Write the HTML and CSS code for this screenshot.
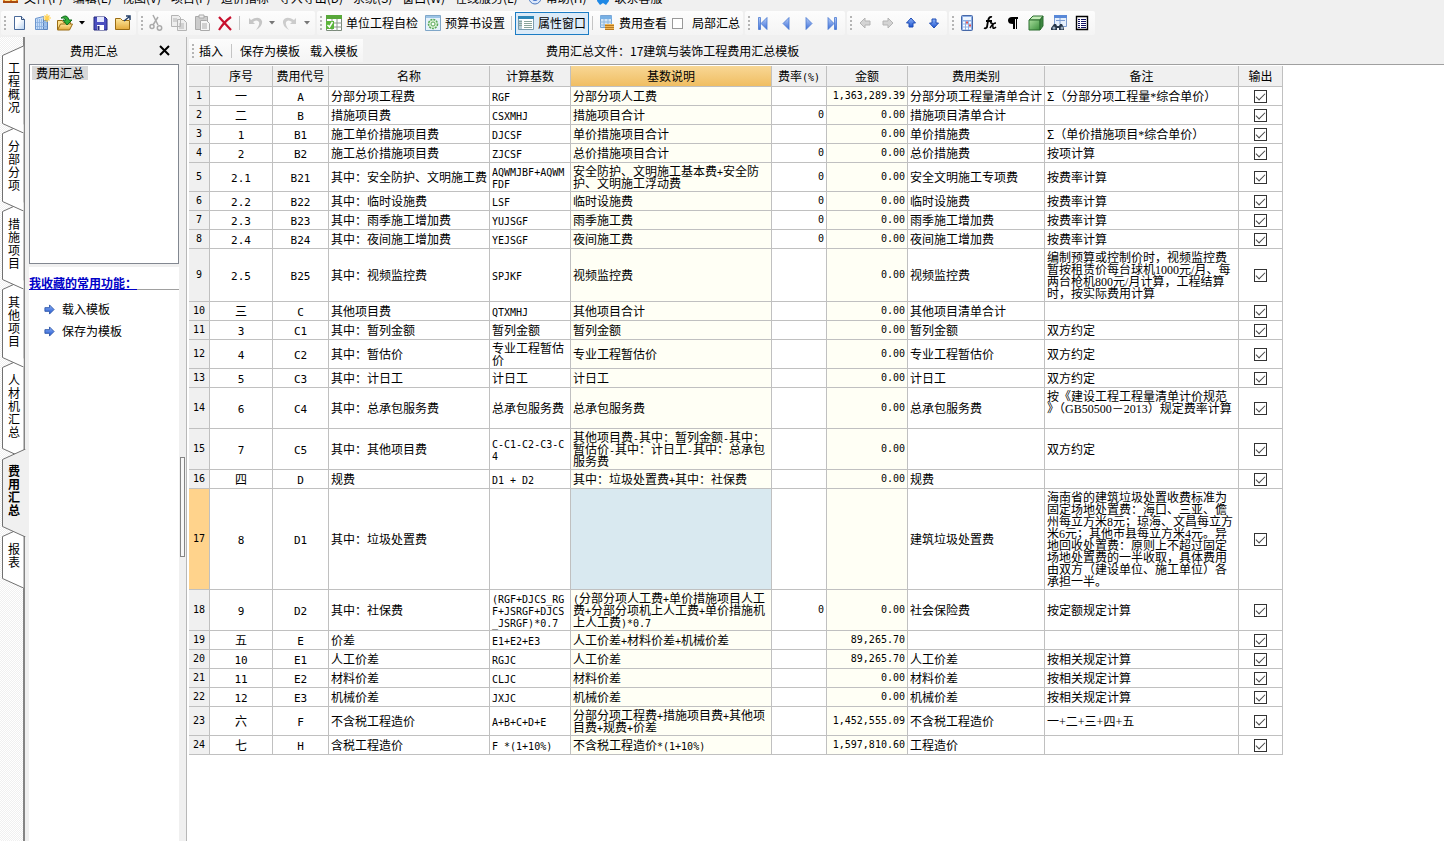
FILE: index.html
```html
<!DOCTYPE html>
<html lang="zh-CN">
<head>
<meta charset="utf-8">
<title>费用汇总</title>
<link rel="stylesheet" href="styles.css">
</head>
<body>
<svg class="defs" aria-hidden="true">
  <defs>
    <linearGradient id="blue" x1="0" y1="0" x2="0" y2="1"><stop offset="0" stop-color="#b5cdf8"/><stop offset="1" stop-color="#3f6fd8"/></linearGradient>
    <linearGradient id="deep" x1="0" y1="0" x2="0" y2="1"><stop offset="0" stop-color="#8fb4f8"/><stop offset="1" stop-color="#1f55d0"/></linearGradient>
    <linearGradient id="gold" x1="0" y1="0" x2="0" y2="1"><stop offset="0" stop-color="#ffe9a0"/><stop offset="1" stop-color="#e3a93a"/></linearGradient>
    <linearGradient id="page" x1="0" y1="0" x2="1" y2="1"><stop offset="0.4" stop-color="#fff"/><stop offset="1" stop-color="#b4d0f0"/></linearGradient>
    <linearGradient id="green" x1="0" y1="0" x2="1" y2="1"><stop offset="0" stop-color="#a6dc9a"/><stop offset="1" stop-color="#3a8f3c"/></linearGradient>
    <symbol id="arrow" viewBox="0 0 12 12"><path d="M1 4h5V1l5 5-5 5V8H1z"/></symbol>
  </defs>
</svg>
<div class="app">
  <nav class="menu">
    <svg class="logo" viewBox="0 0 18 14"><path d="M1 0h15v13H1z" fill="#e88420"/><path d="M3 2h5v9H3zM10 2h4v9h-4z" fill="#ffe08a"/><path d="M1 12h15" stroke="#a84a10" stroke-width="2"/></svg>
    <a href="#">文件(F)</a><a href="#">编辑(E)</a><a href="#">视图(V)</a><a href="#">项目(P)</a><a href="#">造价指标</a><a href="#">导入导出(D)</a><a href="#">系统(S)</a><a href="#">窗口(W)</a><a href="#">在线服务(L)</a>
    <a href="#"><svg viewBox="0 0 14 14"><circle cx="7" cy="7" r="6" fill="#dce8fa" stroke="#4a78c0"/><circle cx="7" cy="7" r="3" fill="#3f70c8"/></svg>帮助(H)</a>
    <a href="#"><svg viewBox="0 0 14 14"><path d="M2 1h10l1 9-3 4-3-2-3 2-3-4z" fill="#1e88e5"/></svg>联系客服</a>
  </nav>

  <header class="toolbar">
    <div class="group">
      <i class="grip"></i>
      <button class="tool" title="新建"><svg viewBox="0 0 18 18"><path d="M4.500 2.500h7l3 3v10h-10z" fill="url(#page)" stroke="#4a6a9a"/><path d="M11.500 2.500v3h3" fill="#dfeafa" stroke="#34507c"/></svg></button>
      <button class="tool" title="新建向导"><svg viewBox="0 0 18 18"><path d="M2.500 4.500l8-2v13h-8z" fill="#c4dcf8" stroke="#6a94cc"/><path d="M10.500 6.500h4v9h-4z" fill="#9cbfea" stroke="#5c86c0"/><path d="M4.500 5v10M6.500 5v10M8.500 5v10M3 8.500h11M3 12.500h11" stroke="#88aee0" stroke-width=".8"/><path d="M14 0v8M10 4h8M11.500 1.500l5 5M16.500 1.500l-5 5" stroke="#ffd04c" stroke-width="1.200"/></svg></button>
      <button class="tool" title="打开"><svg viewBox="0 0 18 18"><path d="M1.500 15.500v-9h5l1 2h7v2" fill="#ffe08a" stroke="#9a6c14"/><path d="M1.500 16l3-6h12l-3 6z" fill="url(#gold)" stroke="#9a6c14"/><path d="M5 4q6-5 8 2h3l-5 5-4-5h3q-1-3-5-2z" fill="#30b038" stroke="#136b1b"/></svg></button>
      <button class="drop" aria-label="更多"><svg viewBox="0 0 6 4"><path d="M0 0h6L3 3.500z"/></svg></button>
      <button class="tool" title="保存"><svg viewBox="0 0 18 18"><path d="M3 3h11l2 2v11H3z" fill="#4b4fc0" stroke="#25287c"/><path d="M6 3h7v5H6z" fill="#e4e8ff"/><path d="M6 11h7v5H6z" fill="#fff"/><path d="M7.500 12v4" stroke="#25287c" stroke-width="2"/></svg></button>
      <button class="tool" title="关闭"><svg viewBox="0 0 18 18"><path d="M1.500 15.500v-11h5l2 2h7v9z" fill="url(#gold)" stroke="#9a6c14"/><path d="M10 7l5-4m-3-1h4v4" fill="none" stroke="#25406a" stroke-width="1.500"/></svg></button>
    </div>
    <div class="group">
      <i class="grip"></i>
      <button class="tool" title="剪切"><svg viewBox="0 0 18 18" fill="none" stroke="#aaa" stroke-width="1.500"><path d="M6 1l5 10M11 3l-5 8"/><circle cx="5" cy="12.500" r="2"/><circle cx="12.500" cy="14" r="2.200"/></svg></button>
      <button class="tool" title="复制"><svg viewBox="0 0 18 18" fill="#eee" stroke="#b4b4b4"><path d="M1.500 1.500h7l2 2v9h-9zM7.500 5.500h6l3 3v8h-9z"/><path d="M3 5h4M3 7h4M9 10h5M9 12h5M9 14h5"/></svg></button>
      <button class="tool" title="粘贴"><svg viewBox="0 0 18 18" fill="#ccc" stroke="#aaa"><path d="M2.500 2.500h12v13h-12z"/><path d="M6 1h5v3H6z" fill="#eee"/><path d="M7.500 6.500h6l3 3v7h-9z" fill="#f6f6f6"/><path d="M9 10h5M9 12h5M9 14h5"/></svg></button>
      <button class="tool" title="删除"><svg viewBox="0 0 18 18"><path d="M3 3l12 13M15 3Q8 8 3 16" fill="none" stroke="#c8102e" stroke-width="2.200"/></svg></button>
      <i class="sep"></i>
      <button class="tool" title="撤销"><svg viewBox="0 0 18 18"><path d="M3 4v6h6L7 8q4-3 6 0 1 3-3 8 7-4 6-9-3-6-11-1z" fill="#c6c6c6"/></svg></button>
      <button class="drop dim" aria-label="更多撤销"><svg viewBox="0 0 6 4"><path d="M0 0h6L3 3.500z"/></svg></button>
      <button class="tool" title="重做"><svg viewBox="0 0 18 18"><path d="M15 4v6H9l2-2Q7 5 5 8q-1 3 3 8-7-4-6-9 3-6 11-1z" fill="#ccc"/></svg></button>
      <button class="drop dim" aria-label="更多重做"><svg viewBox="0 0 6 4"><path d="M0 0h6L3 3.500z"/></svg></button>
    </div>
    <div class="group">
      <i class="grip"></i>
      <button class="text-tool"><svg viewBox="0 0 16 16"><path d="M.5.500h15v15H.5z" fill="#fff" stroke="#7a8a7a"/><path d="M0 0h16v4H0z" fill="#58a83a"/><path d="M6 4v12M11 4v12M0 8h16M0 12h16" stroke="#8a968a"/><path d="M0 6h8v8H0z" fill="#5cb53c"/><path d="M1.500 10l2 2 3-5" fill="none" stroke="#fff" stroke-width="1.500"/></svg>单位工程自检</button>
      <button class="text-tool second"><svg viewBox="0 0 16 16"><path d="M.5.500h15v15H.5z" fill="#e6f2fb" stroke="#7fa6c8"/><path d="M1 1h14v2H1z" fill="#9cc4e6"/><circle cx="8" cy="9" r="4.500" fill="#d9f0d2" stroke="#58a858" stroke-width="1.500" stroke-dasharray="2 1"/><circle cx="8" cy="9" r="2" fill="#fff" stroke="#58a858"/></svg>预算书设置</button>
      <i class="sep"></i>
      <button class="text-tool pressed"><svg viewBox="0 0 16 16"><path d="M.5 1.500h15v13H.5z" fill="#fff" stroke="#7a9cae"/><path d="M0 1h16v3H0z" fill="#2d86b8"/><path d="M1 5h3v9H1z" fill="#b8ccd6"/><path d="M6 6.500h8M6 8.500h8M6 10.500h8M6 12.500h8M1 6.500h3M1 8.500h3M1 10.500h3" stroke="#8aa49a"/></svg>属性窗口</button>
      <i class="sep"></i>
      <button class="text-tool"><svg viewBox="0 0 16 16"><path d="M1.500.500h11v12h-11z" fill="#d5e7f8" stroke="#78a4d4"/><path d="M1 1h12v3H1z" fill="#78b0e4"/><path d="M5 4v8M9 4v8M1 7h12M1 10h12" stroke="#8db6de"/><path d="M6 9h9v6H6z" fill="#f0b858"/><path d="M6 10.500h9M6 12.500h9M6 14.500h9" stroke="#b87820"/></svg>费用查看</button>
      <label class="partial"><input type="checkbox">局部汇总</label>
    </div>
    <div class="group">
      <i class="grip"></i>
      <button class="tool" title="第一个"><svg viewBox="0 0 18 18" fill="url(#blue)" stroke="#4a78d0" stroke-width=".8"><path d="M4.500 3.500h2v12h-2zM13 3.500v12l-6-6z"/></svg></button>
      <button class="tool" title="上一个"><svg viewBox="0 0 18 18" fill="url(#blue)" stroke="#4a78d0" stroke-width=".8"><path d="M12 3.500v12l-6-6z"/></svg></button>
      <button class="tool" title="下一个"><svg viewBox="0 0 18 18" fill="url(#blue)" stroke="#4a78d0" stroke-width=".8"><path d="M6 3.500v12l6-6z"/></svg></button>
      <button class="tool" title="最后一个"><svg viewBox="0 0 18 18" fill="url(#blue)" stroke="#4a78d0" stroke-width=".8"><path d="M11.500 3.500h2v12h-2zM5 3.500v12l6-6z"/></svg></button>
    </div>
    <div class="group">
      <i class="grip"></i>
      <button class="tool" title="左移"><svg viewBox="0 0 18 18"><path d="M14 7H9V4L4 9l5 5v-3h5z" fill="#d4d4d4" stroke="#b4b4b4"/></svg></button>
      <button class="tool" title="右移"><svg viewBox="0 0 18 18"><path d="M4 7h5V4l5 5-5 5v-3H4z" fill="#d4d4d4" stroke="#b4b4b4"/></svg></button>
      <button class="tool" title="上移"><svg viewBox="0 0 18 18"><path d="M7 13V9H4.500L9 4l4.500 5H11v4z" fill="url(#deep)" stroke="#1f4cb4"/></svg></button>
      <button class="tool" title="下移"><svg viewBox="0 0 18 18"><path d="M7 5v4H4.500L9 14l4.500-5H11V5z" fill="url(#deep)" stroke="#1f4cb4"/></svg></button>
    </div>
    <div class="group">
      <i class="grip"></i>
      <button class="tool" title="计算器"><svg viewBox="0 0 18 18"><rect x="3.500" y="1.500" width="11" height="15" rx="1" fill="#8fb0e6" stroke="#4668a8"/><path d="M5 3h8v3H5z" fill="#eef6ff"/><path d="M5 8.500h8M5 11.500h8M5 14.500h8" stroke="#fff" stroke-width="2" stroke-dasharray="2 1"/><path d="M8 8.500h2M11 11.500h2" stroke="#e05050" stroke-width="2"/></svg></button>
      <button class="tool" title="函数"><svg viewBox="0 0 18 18" fill="none" stroke="#000"><path d="M11 3q-3-1-4 4l-1 6q-1 2-3 1M5 7h6" stroke-width="1.800"/><path d="M9 9q3-1 3 5 1 1 3-1M15 9q-3 0-6 5" stroke-width="1.500"/></svg></button>
      <button class="tool" title="段落"><svg viewBox="0 0 18 18"><path d="M8 3h6v2h-1v10h-1V5h-1v10H9v-5Q4 10 4 6.500 4 3 8 3z"/></svg></button>
      <button class="tool" title="三维"><svg viewBox="0 0 18 18" stroke="#2c6e30"><path d="M2 6l4-4h10l-3 4z" fill="#c4ecb8"/><path d="M2 6h11v10H2z" fill="url(#green)"/><path d="M13 6l3-4v10l-3 4z" fill="#3c8640"/></svg></button>
      <button class="tool" title="查找"><svg viewBox="0 0 18 18"><path d="M4.500 1.500h12v11h-12z" fill="#e6f0fc" stroke="#7c9cd0"/><path d="M4 1h13v3H4z" fill="#5888d8"/><path d="M6 6.500h9M10 4v6" stroke="#7c9cd0"/><path d="M4 10h2l1 2h2l1-2h2l2 4v2H9v-2H7v2H1v-2z" fill="#28384a"/><circle cx="4" cy="14" r="1.500" fill="#9ab"/><circle cx="12" cy="14" r="1.500" fill="#9ab"/></svg></button>
      <button class="tool" title="列表"><svg viewBox="0 0 18 18"><path d="M3.500 2.500h11v13h-11z" fill="#fff" stroke="#000" stroke-width="1.400"/><path d="M5 5.500h2M5 7.500h2M5 9.500h2M5 11.500h2M5 13.500h2M8 5.500h5M8 7.500h5M8 9.500h5M8 11.500h5M8 13.500h5" stroke="#101060"/></svg></button>
    </div>
  </header>

  <div class="main">
    <nav class="tabs">
      <button class="tab"><svg viewBox="0 0 22 87"><path d="M21.500 0L.5 9.500v68l21 9.500"/></svg><span>工程概况</span></button>
      <button class="tab"><svg viewBox="0 0 22 87"><path d="M21.500 0L.5 9.500v68l21 9.500"/></svg><span>分部分项</span></button>
      <button class="tab"><svg viewBox="0 0 22 87"><path d="M21.500 0L.5 9.500v68l21 9.500"/></svg><span>措施项目</span></button>
      <button class="tab"><svg viewBox="0 0 22 87"><path d="M21.500 0L.5 9.500v68l21 9.500"/></svg><span>其他项目</span></button>
      <button class="tab"><svg viewBox="0 0 22 100"><path d="M21.500 0L.5 9.500v81l21 9.500"/></svg><span>人材机汇总</span></button>
      <button class="tab current"><svg viewBox="0 0 24 88"><path d="M23.500 0L.5 10.500v67l23 10.500"/></svg><span>费用汇总</span></button>
      <button class="tab"><svg viewBox="0 0 22 61"><path d="M21.500 0L.5 9.500v42l21 9.500"/></svg><span>报表</span></button>
    </nav>

    <aside class="side">
      <div class="side-head"><h2>费用汇总</h2><button aria-label="关闭"><svg viewBox="0 0 11 11"><path d="M1 1l9 9M10 1l-9 9" stroke="#000" stroke-width="2"/></svg></button></div>
      <div class="tree"><button>费用汇总</button></div>
      <section class="favs">
        <h3>我收藏的常用功能：</h3>
        <a href="#"><svg class="arrow"><use href="#arrow"/></svg>载入模板</a>
        <a href="#"><svg class="arrow"><use href="#arrow"/></svg>保存为模板</a>
      </section>
    </aside>
    <div class="splitter"><i></i></div>

    <main class="work">
      <div class="work-head">
        <div class="actions"><i class="grip"></i><button>插入</button><i class="sep"></i><button>保存为模板</button><button>载入模板</button></div>
        <h1>费用汇总文件：17建筑与装饰工程费用汇总模板</h1>
      </div>
      <div class="sheet">
        <table>
          <colgroup><col class="c-row"><col class="c-seq"><col class="c-code"><col class="c-name"><col class="c-base"><col class="c-desc"><col class="c-rate"><col class="c-sum"><col class="c-kind"><col class="c-note"><col class="c-out"></colgroup>
          <thead><tr><th></th><th>序号</th><th>费用代号</th><th>名称</th><th>计算基数</th><th class="hot">基数说明</th><th>费率<b>(%)</b></th><th>金额</th><th>费用类别</th><th>备注</th><th>输出</th></tr></thead>
          <tbody>
<tr><th>1</th><td>一</td><td><b>A</b></td><td>分部分项工程费</td><td><b>RGF</b></td><td>分部分项人工费</td><td></td><td>1,363,289.39</td><td>分部分项工程量清单合计</td><td>Σ（分部分项工程量<b>*</b>综合单价）</td><td><input type="checkbox" aria-label="输出" checked></td></tr>
<tr><th>2</th><td>二</td><td><b>B</b></td><td>措施项目费</td><td><b>CSXMHJ</b></td><td>措施项目合计</td><td>0</td><td>0.00</td><td>措施项目清单合计</td><td></td><td><input type="checkbox" aria-label="输出" checked></td></tr>
<tr><th>3</th><td><b>1</b></td><td><b>B1</b></td><td>施工单价措施项目费</td><td><b>DJCSF</b></td><td>单价措施项目合计</td><td></td><td>0.00</td><td>单价措施费</td><td>Σ（单价措施项目<b>*</b>综合单价）</td><td><input type="checkbox" aria-label="输出" checked></td></tr>
<tr><th>4</th><td><b>2</b></td><td><b>B2</b></td><td>施工总价措施项目费</td><td><b>ZJCSF</b></td><td>总价措施项目合计</td><td>0</td><td>0.00</td><td>总价措施费</td><td>按项计算</td><td><input type="checkbox" aria-label="输出" checked></td></tr>
<tr><th>5</th><td><b>2.1</b></td><td><b>B21</b></td><td>其中：安全防护、文明施工费</td><td><b>AQWMJBF+AQWM<br>FDF</b></td><td>安全防护、文明施工基本费<b>+</b>安全防<br>护、文明施工浮动费</td><td>0</td><td>0.00</td><td>安全文明施工专项费</td><td>按费率计算</td><td><input type="checkbox" aria-label="输出" checked></td></tr>
<tr><th>6</th><td><b>2.2</b></td><td><b>B22</b></td><td>其中：临时设施费</td><td><b>LSF</b></td><td>临时设施费</td><td>0</td><td>0.00</td><td>临时设施费</td><td>按费率计算</td><td><input type="checkbox" aria-label="输出" checked></td></tr>
<tr><th>7</th><td><b>2.3</b></td><td><b>B23</b></td><td>其中：雨季施工增加费</td><td><b>YUJSGF</b></td><td>雨季施工费</td><td>0</td><td>0.00</td><td>雨季施工增加费</td><td>按费率计算</td><td><input type="checkbox" aria-label="输出" checked></td></tr>
<tr><th>8</th><td><b>2.4</b></td><td><b>B24</b></td><td>其中：夜间施工增加费</td><td><b>YEJSGF</b></td><td>夜间施工费</td><td>0</td><td>0.00</td><td>夜间施工增加费</td><td>按费率计算</td><td><input type="checkbox" aria-label="输出" checked></td></tr>
<tr><th>9</th><td><b>2.5</b></td><td><b>B25</b></td><td>其中：视频监控费</td><td><b>SPJKF</b></td><td>视频监控费</td><td></td><td>0.00</td><td>视频监控费</td><td>编制预算或控制价时，视频监控费<br>暂按租赁价每台球机<b>1000</b>元<b>/</b>月、每<br>两台枪机<b>800</b>元<b>/</b>月计算，工程结算<br>时，按实际费用计算</td><td><input type="checkbox" aria-label="输出" checked></td></tr>
<tr><th>10</th><td>三</td><td><b>C</b></td><td>其他项目费</td><td><b>QTXMHJ</b></td><td>其他项目合计</td><td></td><td>0.00</td><td>其他项目清单合计</td><td></td><td><input type="checkbox" aria-label="输出" checked></td></tr>
<tr><th>11</th><td><b>3</b></td><td><b>C1</b></td><td>其中：暂列金额</td><td>暂列金额</td><td>暂列金额</td><td></td><td>0.00</td><td>暂列金额</td><td>双方约定</td><td><input type="checkbox" aria-label="输出" checked></td></tr>
<tr><th>12</th><td><b>4</b></td><td><b>C2</b></td><td>其中：暂估价</td><td>专业工程暂估<br>价</td><td>专业工程暂估价</td><td></td><td>0.00</td><td>专业工程暂估价</td><td>双方约定</td><td><input type="checkbox" aria-label="输出" checked></td></tr>
<tr><th>13</th><td><b>5</b></td><td><b>C3</b></td><td>其中：计日工</td><td>计日工</td><td>计日工</td><td></td><td>0.00</td><td>计日工</td><td>双方约定</td><td><input type="checkbox" aria-label="输出" checked></td></tr>
<tr><th>14</th><td><b>6</b></td><td><b>C4</b></td><td>其中：总承包服务费</td><td>总承包服务费</td><td>总承包服务费</td><td></td><td>0.00</td><td>总承包服务费</td><td>按《建设工程工程量清单计价规范<br>》（<b>GB50500</b>－<b>2013</b>）规定费率计算<br><br></td><td><input type="checkbox" aria-label="输出" checked></td></tr>
<tr><th>15</th><td><b>7</b></td><td><b>C5</b></td><td>其中：其他项目费</td><td><b>C-C1-C2-C3-C<br>4</b></td><td>其他项目费<b>-</b>其中：暂列金额<b>-</b>其中：<br>暂估价<b>-</b>其中：计日工<b>-</b>其中：总承包<br>服务费</td><td></td><td>0.00</td><td></td><td>双方约定</td><td><input type="checkbox" aria-label="输出" checked></td></tr>
<tr><th>16</th><td>四</td><td><b>D</b></td><td>规费</td><td><b>D1 + D2</b></td><td>其中：垃圾处置费<b>+</b>其中：社保费</td><td></td><td>0.00</td><td>规费</td><td></td><td><input type="checkbox" aria-label="输出" checked></td></tr>
<tr class="selected"><th>17</th><td><b>8</b></td><td><b>D1</b></td><td>其中：垃圾处置费</td><td></td><td></td><td></td><td></td><td>建筑垃圾处置费</td><td>海南省的建筑垃圾处置收费标准为<br>固定场地处置费：海口、三亚、儋<br>州每立方米<b>8</b>元；琼海、文昌每立方<br>米<b>6</b>元；其他市县每立方米<b>4</b>元。异<br>地回收处置费：原则上不超过固定<br>场地处置费的一半收取，具体费用<br>由双方（建设单位、施工单位）各<br>承担一半。</td><td><input type="checkbox" aria-label="输出" checked></td></tr>
<tr><th>18</th><td><b>9</b></td><td><b>D2</b></td><td>其中：社保费</td><td><b>(RGF+DJCS_RG<br>F+JSRGF+DJCS<br>_JSRGF)*0.7</b></td><td><b>(</b>分部分项人工费<b>+</b>单价措施项目人工<br>费<b>+</b>分部分项机上人工费<b>+</b>单价措施机<br>上人工费<b>)*0.7</b></td><td>0</td><td>0.00</td><td>社会保险费</td><td>按定额规定计算</td><td><input type="checkbox" aria-label="输出" checked></td></tr>
<tr><th>19</th><td>五</td><td><b>E</b></td><td>价差</td><td><b>E1+E2+E3</b></td><td>人工价差<b>+</b>材料价差<b>+</b>机械价差</td><td></td><td>89,265.70</td><td></td><td></td><td><input type="checkbox" aria-label="输出" checked></td></tr>
<tr><th>20</th><td><b>10</b></td><td><b>E1</b></td><td>人工价差</td><td><b>RGJC</b></td><td>人工价差</td><td></td><td>89,265.70</td><td>人工价差</td><td>按相关规定计算</td><td><input type="checkbox" aria-label="输出" checked></td></tr>
<tr><th>21</th><td><b>11</b></td><td><b>E2</b></td><td>材料价差</td><td><b>CLJC</b></td><td>材料价差</td><td></td><td>0.00</td><td>材料价差</td><td>按相关规定计算</td><td><input type="checkbox" aria-label="输出" checked></td></tr>
<tr><th>22</th><td><b>12</b></td><td><b>E3</b></td><td>机械价差</td><td><b>JXJC</b></td><td>机械价差</td><td></td><td>0.00</td><td>机械价差</td><td>按相关规定计算</td><td><input type="checkbox" aria-label="输出" checked></td></tr>
<tr><th>23</th><td>六</td><td><b>F</b></td><td>不含税工程造价</td><td><b>A+B+C+D+E</b></td><td>分部分项工程费<b>+</b>措施项目费<b>+</b>其他项<br>目费<b>+</b>规费<b>+</b>价差</td><td></td><td>1,452,555.09</td><td>不含税工程造价</td><td>一<b>+</b>二<b>+</b>三<b>+</b>四<b>+</b>五</td><td><input type="checkbox" aria-label="输出" checked></td></tr>
<tr><th>24</th><td>七</td><td><b>H</b></td><td>含税工程造价</td><td><b>F *(1+10%)</b></td><td>不含税工程造价<b>*(1+10%)</b></td><td></td><td>1,597,810.60</td><td>工程造价</td><td></td><td><input type="checkbox" aria-label="输出" checked></td></tr>
          </tbody>
        </table>
      </div>
    </main>
  </div>
</div>
</body>
</html>
```
FILE: styles.css
```css
* { box-sizing: border-box; }
body {
  margin: 0;
  background: #f0f0f0;
  color: #000;
  font: 12px/16px "Noto Sans CJK SC", sans-serif;
}
button {
  margin: 0;
  padding: 0;
  border: 0;
  background: none;
  color: inherit;
  font: inherit;
  white-space: nowrap;
}
a { color: inherit; text-decoration: none; }
h1, h2, h3 { margin: 0; font-size: 12px; font-weight: 400; }
.defs { position: absolute; width: 0; height: 0; }
.app { display: flex; flex-direction: column; height: 100vh; overflow: hidden; }

/* menu */
.menu {
  display: flex;
  align-items: flex-end;
  gap: 10px;
  height: 6px;
  padding-left: 2px;
  overflow: hidden;
  white-space: nowrap;
  flex: none;
}
.menu a { display: flex; align-items: center; gap: 4px; flex: none; }
.menu a svg { width: 14px; height: 14px; }
.menu .logo { width: 18px; height: 14px; margin: 0 -6px 2px 0; flex: none; }

/* toolbar */
.toolbar { display: flex; gap: 2px; padding: 5px 0 2px 1px; flex: none; }
.group {
  display: flex;
  align-items: center;
  height: 24px;
  padding-right: 2px;
  border-radius: 2px;
  background: linear-gradient(#fdfdfd, #f4f4f4);
}
.grip {
  width: 2px;
  height: 14px;
  margin: 0 1px 0 3px;
  background: repeating-linear-gradient(#b4b4b4 0 2px, transparent 2px 4px);
}
.tool { display: grid; place-items: center; width: 23px; height: 22px; }
.tool svg { width: 18px; height: 18px; }
.drop { display: grid; place-items: center; width: 12px; height: 22px; }
.drop svg { width: 6px; height: 4px; }
.dim { fill: #777; }
.sep { width: 1px; height: 14px; margin: 0 3px; background: #c4c4c4; }
.text-tool { display: flex; align-items: center; gap: 4px; height: 23px; padding: 0 3px; }
.text-tool svg { width: 16px; height: 16px; }
.second { margin-left: 1px; }
.pressed { padding: 0 2px; border: 1px solid #1c7cc4; background: #dcebf8; }
.partial { display: flex; align-items: center; gap: 9px; padding: 0 1px 0 2px; }
.partial input { appearance: none; width: 11px; height: 11px; margin: 0; border: 1px solid #999; background: #fff; }

.main { display: flex; flex: 1; min-height: 0; }

/* vertical tabs */
.tabs {
  width: 25px;
  padding: 9px 0 0 2px;
  border-right: 2px solid #858585;
  background: repeating-conic-gradient(#fff 0 25%, #f0f0f0 0 50%) 0 0 / 2px 2px;
  flex: none;
}
.tab { display: block; position: relative; width: 21px; padding: 15px 0 11px 6px; }
.tab svg { position: absolute; top: 0; left: 0; width: 22px; fill: #fff; stroke: #707070; }
.tab span { display: block; position: relative; width: 12px; line-height: 13px; white-space: normal; word-break: break-all; }
.tab:nth-child(1) { z-index: 7; }
.tab:nth-child(2) { z-index: 6; }
.tab:nth-child(3) { z-index: 5; }
.tab:nth-child(4) { z-index: 4; }
.tab:nth-child(5) { z-index: 3; }
.tab.current { z-index: 8; font-weight: 700; }
.tab.current svg { width: 24px; fill: #f0f0f0; }

/* side panel */
.side { display: flex; flex-direction: column; width: 154px; padding-left: 4px; flex: none; }
.side-head { display: flex; align-items: center; height: 27px; padding-right: 9px; }
.side-head h2 { flex: 1; text-align: center; }
.side-head button { display: grid; }
.side-head svg { width: 11px; height: 11px; }
.tree { height: 200px; padding: 1px 2px; border: 1px solid #828790; background: #fff; flex: none; }
.tree button { display: block; height: 14px; padding: 0 4px; background: #d9d9d9; line-height: 14px; }
.favs { flex: 1; margin-top: 3px; background: #fff; }
.favs h3 { height: 23px; margin-bottom: 8px; padding-top: 8px; border-bottom: 1px solid #a0a0a0; color: #0000c8; font-weight: 700; text-decoration: underline; white-space: nowrap; }
.favs a { display: flex; align-items: center; gap: 7px; height: 22px; padding-left: 15px; }
.arrow { width: 11px; height: 11px; fill: url(#deep); stroke: #2f58a8; stroke-width: 1; }
.splitter { width: 8px; padding: 420px 1px 0; border-right: 1px solid #b8b8b8; flex: none; }
.splitter i { display: block; height: 100px; border: 1px solid #858585; background: #f8f8f8; }

/* work area */
.work { display: flex; flex-direction: column; flex: 1; min-width: 0; }
.work-head { display: flex; align-items: center; height: 27px; padding-left: 2px; flex: none; }
.actions { display: flex; align-items: center; height: 23px; background: linear-gradient(#fcfcfc, #f4f4f4); }
.actions button { padding: 0 5px; }
.actions .grip { margin-right: 0; }
.work-head h1 { margin-left: 183px; white-space: nowrap; }
.sheet { flex: 1; padding: 1px 0 0 2px; border-top: 1px solid #a0a0a0; background: #fff; overflow: hidden; }

table { width: 1094px; border-collapse: separate; border-spacing: 0; table-layout: fixed; line-height: 12px; white-space: nowrap; }
.c-row { width: 21px; }
.c-seq { width: 63px; }
.c-code { width: 56px; }
.c-name { width: 161px; }
.c-base { width: 81px; }
.c-desc { width: 201px; }
.c-rate { width: 55px; }
.c-sum { width: 81px; }
.c-kind { width: 137px; }
.c-note { width: 194px; }
.c-out { width: 44px; }
th, td {
  height: 19px;
  padding: 2px;
  border: solid #c0c0c0;
  border-width: 0 1px 1px 0;
  font-weight: 400;
  text-align: left;
  vertical-align: middle;
}
th { background: #f0f0f0; text-align: center; }
thead th { height: 21px; }
.hot { background: linear-gradient(#f8d795, #f0be62); }
b, tbody th, td:nth-child(7), td:nth-child(8) { font-family: "DejaVu Sans Mono", monospace; font-size: 10px; font-weight: 400; }
b { line-height: 0; }
td:nth-child(2) b, td:nth-child(3) b { font-size: 11px; }
td:nth-child(10) b { font-family: "Liberation Serif", serif; font-size: 12px; }
td:nth-child(2), td:nth-child(3), td:nth-child(11) { text-align: center; }
td:nth-child(7), td:nth-child(8) { text-align: right; }
td:nth-child(6), td:nth-child(8) { background: #fffff5; }
.selected th { background: #ffd38c; }
.selected td:nth-child(6) { background: #d9e9f0; }
td input {
  display: block;
  position: relative;
  appearance: none;
  width: 13px;
  height: 13px;
  margin: 0 auto;
  border: 1px solid #333;
  background: #fff;
}
td input:checked::after {
  content: "";
  display: block;
  width: 8px;
  height: 4px;
  margin: 2px 0 0 1px;
  border: solid #444;
  border-width: 0 0 1px 1px;
  transform: rotate(-45deg);
}
```
